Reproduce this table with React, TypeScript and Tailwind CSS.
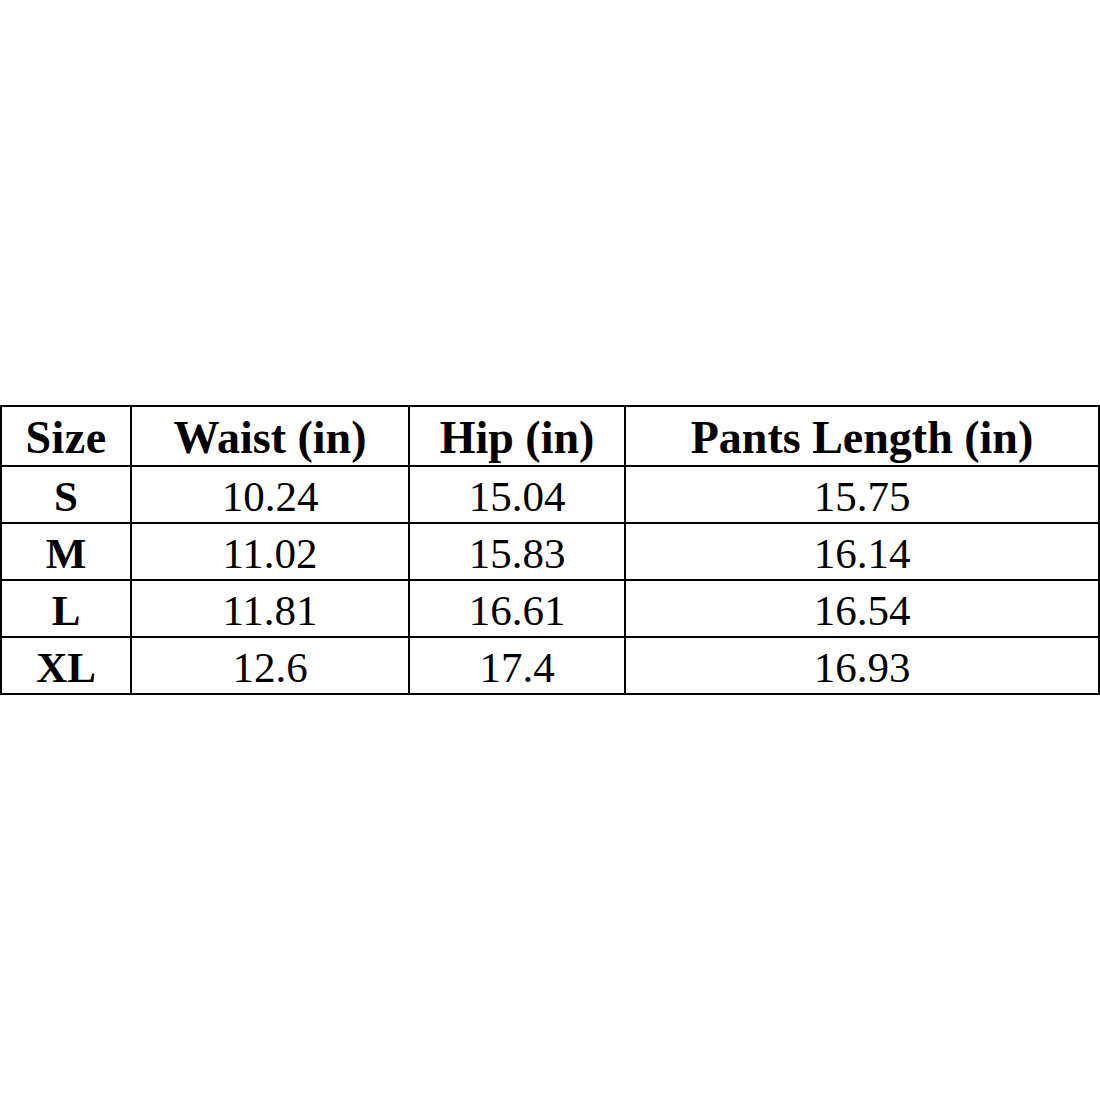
import React from 'react';

const rows = [
  { size: 'S', waist: '10.24', hip: '15.04', length: '15.75' },
  { size: 'M', waist: '11.02', hip: '15.83', length: '16.14' },
  { size: 'L', waist: '11.81', hip: '16.61', length: '16.54' },
  { size: 'XL', waist: '12.6', hip: '17.4', length: '16.93' },
];

const App: React.FC = () => {
  return (
    <div className="flex h-[1100px] w-[1100px] items-center bg-white font-['Liberation_Serif',serif] text-black">
      <table className="w-[1098px] table-fixed border-collapse border-2 border-black">
        <colgroup>
          <col className="w-[130px]" />
          <col className="w-[278px]" />
          <col className="w-[216px]" />
          <col className="w-[474px]" />
        </colgroup>
        <thead>
          <tr className="h-[60px]">
            <th className="border-2 border-black pt-1 text-center text-[46px] font-bold leading-none tracking-[0.5px]">Size</th>
            <th className="border-2 border-black pt-1 text-center text-[46px] font-bold leading-none">Waist (in)</th>
            <th className="border-2 border-black pt-1 text-center text-[46px] font-bold leading-none">Hip (in)</th>
            <th className="border-2 border-black pt-1 text-center text-[46px] font-bold leading-none">Pants Length (in)</th>
          </tr>
        </thead>
        <tbody>
          {rows.map((r) => (
            <tr key={r.size} className="h-[57px]">
              <td className="border-2 border-black pt-1 text-center text-[43px] font-bold leading-none">{r.size}</td>
              <td className="border-2 border-black pt-1 text-center text-[43px] leading-none">{r.waist}</td>
              <td className="border-2 border-black pt-1 text-center text-[43px] leading-none">{r.hip}</td>
              <td className="border-2 border-black pt-1 text-center text-[43px] leading-none">{r.length}</td>
            </tr>
          ))}
        </tbody>
      </table>
    </div>
  );
};

export default App;
